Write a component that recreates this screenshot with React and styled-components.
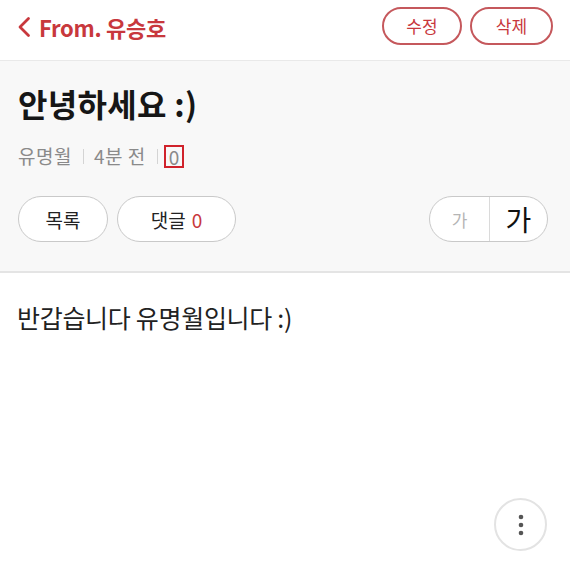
import React from "react";
import styled, { createGlobalStyle } from "styled-components";

const Global = createGlobalStyle`
  html, body { margin: 0; padding: 0; background: #fff; }
  body { font-family: "Noto Sans CJK KR", "Noto Sans", sans-serif; }
  * { box-sizing: border-box; }
`;

const Page = styled.div`
  width: 570px;
  min-height: 586px;
  display: flex;
  flex-direction: column;
`;

const Header = styled.header`
  height: 61px;
  display: flex;
  align-items: center;
  justify-content: space-between;
  padding: 0 17px 2px 17px;
  border-bottom: 1px solid #e9e9e9;
`;

const Back = styled.div`
  display: flex;
  align-items: center;
  gap: 8px;
  margin-top: -4px;
  color: #c8383d;
  font-size: 22px;
  font-weight: 700;
  letter-spacing: -0.3px;
`;

const HeaderActions = styled.div`
  display: flex;
  gap: 8px;
  margin-top: -7px;
`;

const OutlineButton = styled.button`
  height: 38px;
  width: ${(p) => p.$w}px;
  border-radius: 20px;
  border: 2px solid #c5585c;
  background: #fff;
  color: #c8383d;
  font-family: inherit;
  font-size: 17px;
  padding: 0;
`;

const Summary = styled.section`
  background: #f8f8f8;
  border-bottom: 2px solid #e4e4e4;
  padding: 22px 17px 29px 18px;
  display: flex;
  flex-direction: column;
`;

const Title = styled.h1`
  margin: 0;
  font-size: 32px;
  font-weight: 700;
  color: #161616;
  line-height: 40px;
  letter-spacing: 0.3px;
`;

const Meta = styled.div`
  margin-top: 20px;
  display: flex;
  align-items: center;
  color: #8a8a8a;
  font-size: 19px;
  line-height: 26px;
  letter-spacing: 0.5px;
`;

const Sep = styled.span`
  width: 1px;
  height: 15px;
  background: #d4d4d4;
  margin: 0 10px 0 11px;
`;

const Boxed = styled.span`
  border: 2px solid #d0222b;
  padding: 0 3px;
  margin-left: -4px;
  line-height: 19px;
  letter-spacing: 0;
`;

const ActionRow = styled.div`
  margin-top: 27px;
  display: flex;
  align-items: center;
  justify-content: space-between;
`;

const Group = styled.div`
  display: flex;
  gap: 9px;
`;

const PillButton = styled.button`
  height: 46px;
  width: ${(p) => p.$w}px;
  border-radius: 23px;
  border: 1.5px solid #c9c9c9;
  background: #fff;
  font-family: inherit;
  font-size: 19px;
  color: #222;
  padding: 0;
`;

const Count = styled.span`
  color: #c8383d;
  margin-left: 6px;
`;

const SizeToggle = styled.div`
  height: 46px;
  width: 119px;
  border-radius: 23px;
  border: 1.5px solid #c9c9c9;
  background: #fff;
  display: grid;
  grid-template-columns: 59px 1fr;
  overflow: hidden;
  margin-right: 5px;
`;

const SizeOption = styled.div`
  display: flex;
  align-items: center;
  justify-content: center;
  font-size: ${(p) => (p.$big ? 28 : 17)}px;
  color: ${(p) => (p.$big ? "#111" : "#b5b5b5")};
  & + & { border-left: 1.5px solid #dadada; }
`;

const Body = styled.main`
  flex: 1;
  position: relative;
  padding: 26px 17px;
  font-size: 25px;
  color: #222;
  line-height: 36px;
  letter-spacing: -0.3px;
`;

const MoreButton = styled.button`
  position: absolute;
  left: 494px;
  top: 225px;
  width: 53px;
  height: 53px;
  border-radius: 50%;
  border: 2px solid #e3e3e3;
  background: #fff;
  display: flex;
  align-items: center;
  justify-content: center;
  padding: 0;
`;

export default function App() {
  return (
    <>
      <Global />
      <Page>
        <Header>
          <Back>
            <svg width="14" height="22" viewBox="0 0 14 22" fill="none">
              <path d="M11.5 2.5L3 11l8.5 8.5" stroke="#c8383d" strokeWidth="2.8" strokeLinecap="round" strokeLinejoin="round" />
            </svg>
            <span>From. 유승호</span>
          </Back>
          <HeaderActions>
            <OutlineButton $w={80}>수정</OutlineButton>
            <OutlineButton $w={83}>삭제</OutlineButton>
          </HeaderActions>
        </Header>
        <Summary>
          <Title>안녕하세요 :)</Title>
          <Meta>
            <span>유명월</span>
            <Sep />
            <span>4분 전</span>
            <Sep />
            <Boxed>0</Boxed>
          </Meta>
          <ActionRow>
            <Group>
              <PillButton $w={90}>목록</PillButton>
              <PillButton $w={119}>
                댓글<Count>0</Count>
              </PillButton>
            </Group>
            <SizeToggle>
              <SizeOption>가</SizeOption>
              <SizeOption $big>가</SizeOption>
            </SizeToggle>
          </ActionRow>
        </Summary>
        <Body>
          반갑습니다 유명월입니다 :)
          <MoreButton aria-label="more">
            <svg width="6" height="22" viewBox="0 0 6 22">
              <circle cx="3" cy="3" r="2.3" fill="#555" />
              <circle cx="3" cy="11" r="2.3" fill="#555" />
              <circle cx="3" cy="19" r="2.3" fill="#555" />
            </svg>
          </MoreButton>
        </Body>
      </Page>
    </>
  );
}
